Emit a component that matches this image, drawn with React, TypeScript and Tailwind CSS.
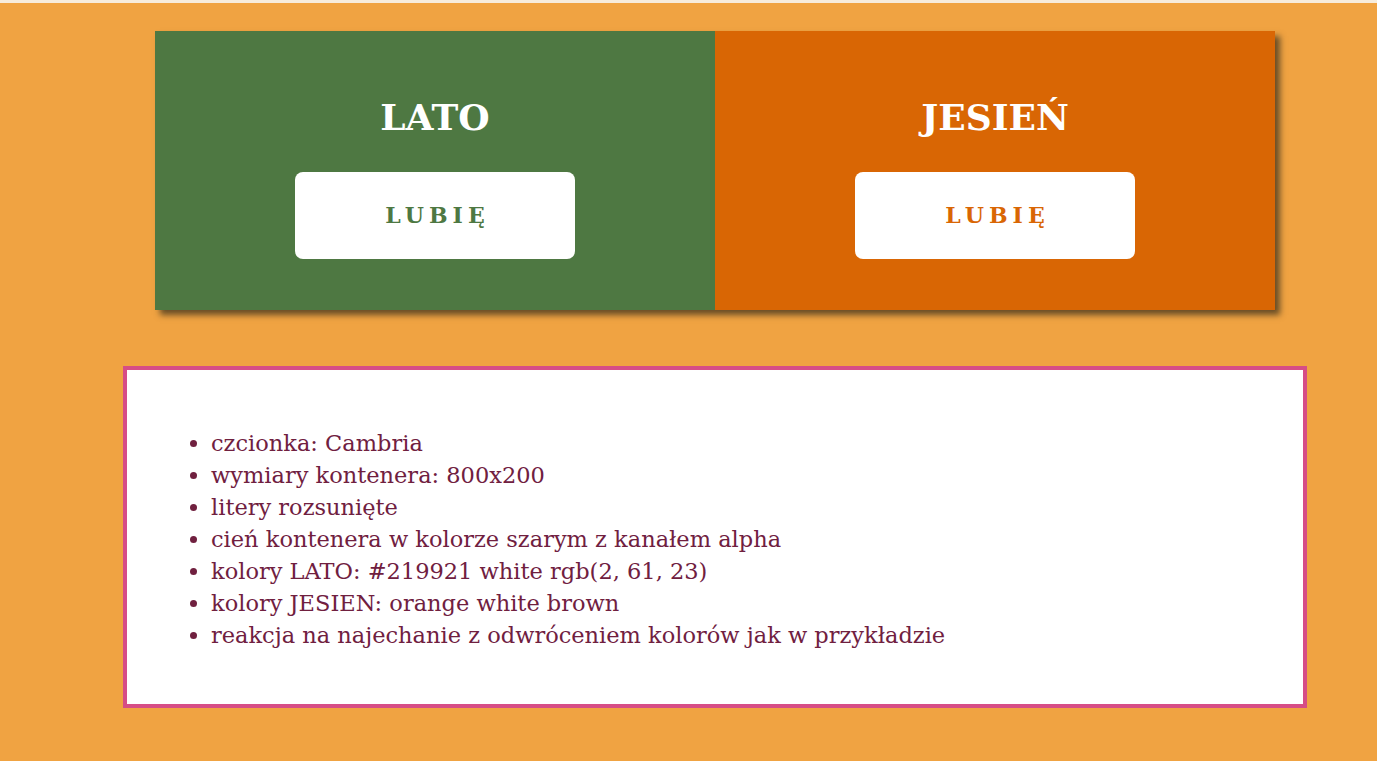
const items = [
  "czcionka: Cambria",
  "wymiary kontenera: 800x200",
  "litery rozsunięte",
  "cień kontenera w kolorze szarym z kanałem alpha",
  "kolory LATO: #219921 white rgb(2, 61, 23)",
  "kolory JESIEN: orange white brown",
  "reakcja na najechanie z odwróceniem kolorów jak w przykładzie",
]

function Season({ title, bg, fg }: { title: string; bg: string; fg: string }) {
  return (
    <div className={`flex-1 flex flex-col items-center pt-[62px] ${bg}`}>
      <h2 className="text-[36px] leading-[48px] font-bold text-white">{title}</h2>
      <button className={`mt-[31px] w-[280px] h-[87px] rounded-lg bg-white text-[22px] font-bold tracking-[0.23em] pl-[0.23em] ${fg}`}>
        LUBIĘ
      </button>
    </div>
  )
}

export default function App() {
  return (
    <div className="min-h-[761px] bg-[#f0a342] font-['DejaVu_Serif',serif] border-t-[3px] border-[#f7ecdc]">
      <div className="pt-[28px] pl-[155px]">
        <div className="w-[1120px] h-[279px] flex shadow-[5px_5px_6px_rgba(60,50,30,0.75)]">
          <Season title="LATO" bg="bg-[#4e7842]" fg="text-[#4e7842]" />
          <Season title="JESIEŃ" bg="bg-[#d96604]" fg="text-[#d96604]" />
        </div>
      </div>
      <div className="mt-[56px] ml-[123px] w-[1184px] h-[342px] border-4 border-[#d64d86] bg-white pt-[57px] pl-[84px]">
        <ul className="list-disc text-[22.5px] leading-[32px] text-[#70203f]">
          {items.map((t) => (
            <li key={t}>{t}</li>
          ))}
        </ul>
      </div>
    </div>
  )
}
